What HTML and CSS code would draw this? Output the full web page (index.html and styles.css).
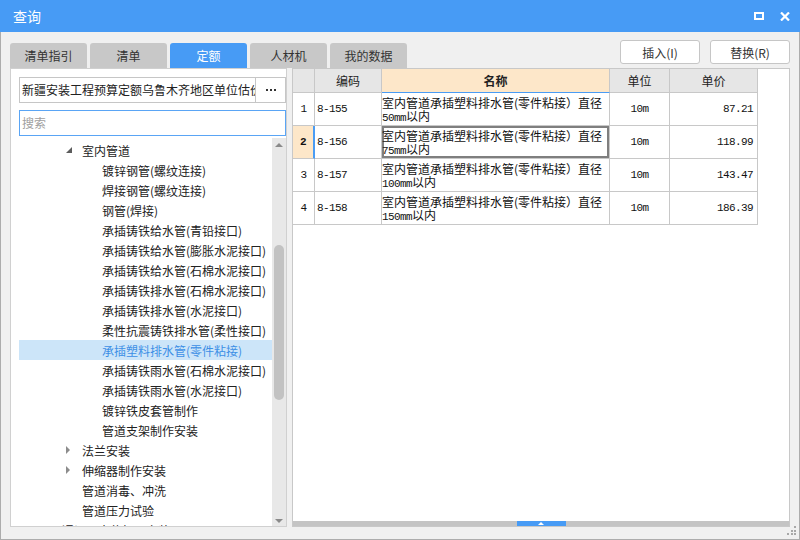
FILE: index.html
```html
<!DOCTYPE html>
<html lang="zh-CN">
<head>
<meta charset="utf-8">
<title>查询</title>
<link rel="stylesheet" href="styles.css">
</head>
<body>
<div class="window">
  <div class="titlebar">
    <span class="title">查询</span>
    <div class="win-ctrls">
      <svg class="ic-max" width="10" height="8" viewBox="0 0 10 8"><rect x="1" y="1" width="8" height="6" fill="none" stroke="#fff" stroke-width="2"/></svg>
      <svg class="ic-close" width="10" height="9" viewBox="0 0 10 9"><path d="M1 0.5 L9 8.5 M9 0.5 L1 8.5" stroke="#fff" stroke-width="2.2" fill="none"/></svg>
    </div>
  </div>
  <div class="body">
    <div class="toolbar">
      <div class="tabs">
        <div class="tab">清单指引</div>
        <div class="tab">清单</div>
        <div class="tab active">定额</div>
        <div class="tab">人材机</div>
        <div class="tab">我的数据</div>
      </div>
      <div class="actions">
        <div class="btn">插入(I)</div>
        <div class="btn">替换(R)</div>
      </div>
    </div>
    <div class="main">
      <div class="left">
        <div class="combo">
          <div class="combo-text">新疆安装工程预算定额乌鲁木齐地区单位估价表</div>
          <div class="combo-btn"><span class="dot"></span><span class="dot"></span><span class="dot"></span></div>
        </div>
        <div class="search">搜索</div>
        <div class="tree">
          <div class="tree-list">
            <div class="row l2"><span class="arr"><svg width="7" height="7" viewBox="0 0 7 7"><polygon points="6,0 6,6 0,6" fill="#5c5c5c"/></svg></span><span>室内管道</span></div>
            <div class="row l3"><span class="arr"></span><span>镀锌钢管(螺纹连接)</span></div>
            <div class="row l3"><span class="arr"></span><span>焊接钢管(螺纹连接)</span></div>
            <div class="row l3"><span class="arr"></span><span>钢管(焊接)</span></div>
            <div class="row l3"><span class="arr"></span><span>承插铸铁给水管(青铅接口)</span></div>
            <div class="row l3"><span class="arr"></span><span>承插铸铁给水管(膨胀水泥接口)</span></div>
            <div class="row l3"><span class="arr"></span><span>承插铸铁给水管(石棉水泥接口)</span></div>
            <div class="row l3"><span class="arr"></span><span>承插铸铁排水管(石棉水泥接口)</span></div>
            <div class="row l3"><span class="arr"></span><span>承插铸铁排水管(水泥接口)</span></div>
            <div class="row l3"><span class="arr"></span><span>柔性抗震铸铁排水管(柔性接口)</span></div>
            <div class="row l3 sel"><span class="arr"></span><span>承插塑料排水管(零件粘接)</span></div>
            <div class="row l3"><span class="arr"></span><span>承插铸铁雨水管(石棉水泥接口)</span></div>
            <div class="row l3"><span class="arr"></span><span>承插铸铁雨水管(水泥接口)</span></div>
            <div class="row l3"><span class="arr"></span><span>镀锌铁皮套管制作</span></div>
            <div class="row l3"><span class="arr"></span><span>管道支架制作安装</span></div>
            <div class="row l2"><span class="arr"><svg width="5" height="8" viewBox="0 0 5 8"><polygon points="0,0 4,4 0,8" fill="#8c8c8c"/></svg></span><span>法兰安装</span></div>
            <div class="row l2"><span class="arr"><svg width="5" height="8" viewBox="0 0 5 8"><polygon points="0,0 4,4 0,8" fill="#8c8c8c"/></svg></span><span>伸缩器制作安装</span></div>
            <div class="row l2"><span class="arr"></span><span>管道消毒、冲洗</span></div>
            <div class="row l2"><span class="arr"></span><span>管道压力试验</span></div>
            <div class="row l1"><span class="arr"></span><span>通讯、水位标尺安装</span></div>
          </div>
          <div class="scrollbar">
            <div class="sb-btn up"><svg width="8" height="4" viewBox="0 0 8 4"><polygon points="4,0 8,4 0,4" fill="#8a8a8a"/></svg></div>
            <div class="sb-track"><div class="sb-thumb"></div></div>
            <div class="sb-btn down"><svg width="8" height="4" viewBox="0 0 8 4"><polygon points="0,0 8,0 4,4" fill="#8a8a8a"/></svg></div>
          </div>
        </div>
      </div>
      <div class="right">
        <div class="grid">
          <div class="gt">
            <div class="c h"></div>
            <div class="c h">编码</div>
            <div class="c h name">名称</div>
            <div class="c h">单位</div>
            <div class="c h">单价</div>

            <div class="c num"><span class="m">1</span></div>
            <div class="c code"><span class="m">8-155</span></div>
            <div class="c desc"><div class="lines"><div class="ln">室内管道承插塑料排水管(零件粘接）直径</div><div class="ln"><span class="m">50mm</span>以内</div></div></div>
            <div class="c unit"><span class="m">10m</span></div>
            <div class="c price"><span class="m">87.21</span></div>

            <div class="c num cur"><span class="m b">2</span></div>
            <div class="c code"><span class="m">8-156</span></div>
            <div class="c desc focus"><div class="lines"><div class="ln">室内管道承插塑料排水管(零件粘接）直径</div><div class="ln"><span class="m">75mm</span>以内</div></div></div>
            <div class="c unit"><span class="m">10m</span></div>
            <div class="c price"><span class="m">118.99</span></div>

            <div class="c num"><span class="m">3</span></div>
            <div class="c code"><span class="m">8-157</span></div>
            <div class="c desc"><div class="lines"><div class="ln">室内管道承插塑料排水管(零件粘接）直径</div><div class="ln"><span class="m">100mm</span>以内</div></div></div>
            <div class="c unit"><span class="m">10m</span></div>
            <div class="c price"><span class="m">143.47</span></div>

            <div class="c num"><span class="m">4</span></div>
            <div class="c code"><span class="m">8-158</span></div>
            <div class="c desc"><div class="lines"><div class="ln">室内管道承插塑料排水管(零件粘接）直径</div><div class="ln"><span class="m">150mm</span>以内</div></div></div>
            <div class="c unit"><span class="m">10m</span></div>
            <div class="c price"><span class="m">186.39</span></div>
          </div>
        </div>
        <div class="hbar"><div class="hbar-thumb"><svg width="6" height="3" viewBox="0 0 6 3"><polygon points="3,0 6,3 0,3" fill="#fff"/></svg></div></div>
      </div>
    </div>
  </div>
  <svg class="grip" width="10" height="10" viewBox="0 0 10 10">
    <rect x="7" y="0" width="2" height="2" fill="#a8a8a8"/>
    <rect x="4" y="4" width="2" height="2" fill="#a8a8a8"/>
    <rect x="7" y="4" width="2" height="2" fill="#a8a8a8"/>
    <rect x="0" y="7" width="2" height="2" fill="#a8a8a8"/>
    <rect x="4" y="7" width="2" height="2" fill="#a8a8a8"/>
    <rect x="7" y="7" width="2" height="2" fill="#a8a8a8"/>
  </svg>
</div>
</body>
</html>
```

FILE: styles.css
```css
* { box-sizing: border-box; }
body {
  margin: 0;
  font-family: "Noto Sans CJK SC", "Microsoft YaHei", sans-serif;
  font-size: 12px;
  color: #222;
  background: #f0f0f0;
}
.window {
  position: relative;
  width: 800px;
  height: 540px;
  display: flex;
  flex-direction: column;
  background: #f0f0f0;
}
.titlebar {
  height: 32px;
  flex: none;
  background: #479bf5;
  color: #fff;
  display: flex;
  align-items: center;
  padding: 0 10px 0 13px;
}
.title { font-size: 14px; }
.win-ctrls {
  margin-left: auto;
  display: flex;
  align-items: center;
  gap: 16px;
}
.body {
  flex: 1;
  min-height: 0;
  display: flex;
  flex-direction: column;
  border: 1px solid #acacac;
  border-top: none;
  padding: 0 9px 12px 9px;
}
.toolbar {
  height: 36px;
  flex: none;
  display: flex;
  align-items: flex-start;
  padding-top: 8px;
}
.tabs { display: flex; gap: 3px; margin-top: 3px; }
.tab {
  width: 77px;
  height: 25px;
  background: #c8c8c8;
  border-radius: 3px 3px 0 0;
  display: flex;
  align-items: center;
  justify-content: center;
  color: #333;
}
.tab.active { background: #479bf5; color: #fff; }
.actions { margin-left: auto; display: flex; gap: 10px; }
.btn {
  width: 80px;
  height: 24px;
  border: 1px solid #c6c6c6;
  border-radius: 3px;
  background: #fff;
  display: flex;
  align-items: center;
  justify-content: center;
  color: #333;
}
.main { flex: 1; min-height: 0; display: flex; gap: 5px; }
.left {
  width: 277px;
  flex: none;
  border: 1px solid #d0d0d0;
  background: #fff;
  display: flex;
  flex-direction: column;
  padding: 8px 0 0 8px;
}
.combo {
  height: 26px;
  flex: none;
  border: 1px solid #c6c6c6;
  display: flex;
}
.combo-text {
  flex: 1;
  overflow: hidden;
  white-space: nowrap;
  padding-left: 2px;
  line-height: 24px;
  color: #222;
}
.combo-btn {
  width: 30px;
  flex: none;
  border-left: 1px solid #c6c6c6;
  display: flex;
  align-items: center;
  justify-content: center;
  gap: 2px;
}
.dot { width: 2px; height: 2px; background: #333; }
.search {
  margin-top: 7px;
  height: 26px;
  flex: none;
  border: 1px solid #5aa5f5;
  padding-left: 2px;
  line-height: 24px;
  color: #a0a0a0;
}
.tree { flex: 1; min-height: 0; margin-top: 2px; display: flex; }
.tree-list { flex: 1; overflow: hidden; padding-top: 2px; }
.row {
  height: 20px;
  display: flex;
  align-items: center;
  white-space: nowrap;
  color: #222;
}
.row .arr { width: 16px; flex: none; display: flex; align-items: center; }
.row.l1 { padding-left: 27px; }
.row.l2 { padding-left: 47px; }
.row.l3 { padding-left: 67px; }
.row.sel { background: #cce5f9; color: #3d8fe6; }
.scrollbar {
  width: 14px;
  flex: none;
  background: #e8e8e8;
  display: flex;
  flex-direction: column;
  align-items: center;
}
.sb-btn { height: 14px; flex: none; display: flex; justify-content: center; }
.sb-btn.up { align-items: flex-start; padding-top: 5px; }
.sb-btn.down { align-items: flex-start; padding-top: 7px; }
.sb-track { flex: 1; padding-top: 93px; }
.sb-thumb { width: 10px; height: 155px; background: #c2c2c2; border-radius: 5px; }
.right {
  flex: 1;
  border: 1px solid #c8c8c8;
  background: #fff;
  display: flex;
  flex-direction: column;
}
.grid { flex: 1; min-height: 0; }
.gt {
  display: grid;
  grid-template-columns: 22px 67px 228px 60px 88px;
  width: 465px;
}
.c {
  height: 33px;
  border-right: 1px solid #c8c8c8;
  border-bottom: 1px solid #c8c8c8;
  display: flex;
  align-items: center;
  overflow: hidden;
  white-space: nowrap;
  color: #111;
}
.c.h {
  height: 24px;
  background: #e6e6e6;
  justify-content: center;
  color: #222;
}
.c.h.name {
  background: #fde7c9;
  font-weight: bold;
  border-bottom-color: #4a9cf4;
}
.m {
  font-family: "Liberation Mono", "DejaVu Sans Mono", monospace;
  font-size: 11px;
  letter-spacing: -0.6px;
}
.m.b { font-weight: bold; }
.c.num { justify-content: center; }
.c.num.cur { background: #fde7c9; border-right: 2px solid #4a9cf4; }
.c.code { padding-left: 2px; }
.c.desc { padding-left: 0; }
.lines { display: flex; flex-direction: column; }
.ln { height: 13px; line-height: 13px; }
.c.desc.focus { box-shadow: inset 0 0 0 2px #7f7f7f; }
.c.unit { justify-content: center; }
.c.price { justify-content: flex-end; padding-right: 4px; }
.hbar {
  height: 5px;
  flex: none;
  background: #c4c4c4;
  display: flex;
  justify-content: center;
}
.hbar-thumb {
  width: 49px;
  background: #479bf5;
  display: flex;
  align-items: center;
  justify-content: center;
}
.grip { position: absolute; right: 3px; bottom: 4px; }
```
